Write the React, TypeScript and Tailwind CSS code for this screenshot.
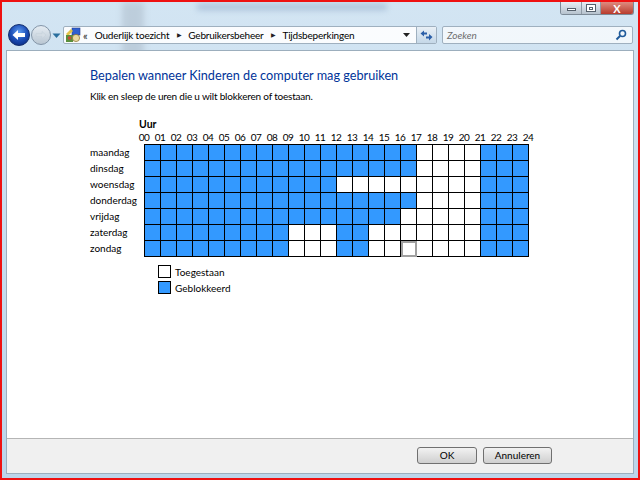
const dagen = ["maandag", "dinsdag", "woensdag", "donderdag", "vrijdag", "zaterdag", "zondag"];

// 1 = geblokkeerd, 0 = toegestaan
const rij = (s: string) => s.split("").map((c) => c === "1");
const uren = [
  rij("111111111111111110000111"),
  rij("111111111111111110000111"),
  rij("111111111111000000000111"),
  rij("111111111111111110000111"),
  rij("111111111111111100000111"),
  rij("111111111000110000000111"),
  rij("111111111000110000000111"),
];
const labels = Array.from({ length: 25 }, (_, i) => String(i).padStart(2, "0"));

function BackButton() {
  return (
    <svg width="22" height="22" viewBox="0 0 22 22" className="shrink-0">
      <defs>
        <radialGradient id="bk" cx="50%" cy="35%" r="70%">
          <stop offset="0%" stopColor="#5f9cf0" />
          <stop offset="55%" stopColor="#1d4fb8" />
          <stop offset="100%" stopColor="#0a2a80" />
        </radialGradient>
      </defs>
      <circle cx="11" cy="11" r="10.5" fill="url(#bk)" stroke="#16306f" />
      <path d="M4.5 11 L10 6 V9 H17 V13 H10 V16 Z" fill="#fff" />
    </svg>
  );
}

function ForwardButton() {
  return (
    <svg width="20" height="20" viewBox="0 0 20 20" className="shrink-0">
      <defs>
        <linearGradient id="fw" x1="0" y1="0" x2="0" y2="1">
          <stop offset="0%" stopColor="#e6edf3" />
          <stop offset="100%" stopColor="#b9c6d2" />
        </linearGradient>
      </defs>
      <circle cx="10" cy="10" r="9.5" fill="url(#fw)" stroke="#8496a8" />
      <path d="M15 10 L11 6.5 V8.7 H5 V11.3 H11 V13.5 Z" fill="#d4dde5" stroke="#c2ced9" strokeWidth="0.5" />
    </svg>
  );
}

function PanelIcon() {
  return (
    <svg width="16" height="16" viewBox="0 0 16 16" className="shrink-0">
      <rect x="7" y="1" width="8" height="7" fill="#2f5fd0" stroke="#27408b" strokeWidth="0.6" />
      <path d="M1 7 L6 2 L8 4 L3 9 Z" fill="#e3c34a" />
      <rect x="1" y="8" width="7" height="7" fill="#5a8f3c" />
      <circle cx="11" cy="11" r="3.6" fill="#e8d9a0" stroke="#8a6b2a" strokeWidth="0.7" />
      <circle cx="4.5" cy="11" r="1.8" fill="#c64a3a" />
    </svg>
  );
}

function App() {
  return (
    <div
      className="w-[640px] h-[480px] relative overflow-hidden border-2 border-[#ee1111] flex flex-col bg-gradient-to-b from-[#d3e5f3] to-[#bcd5ea] text-black"
      style={{ fontFamily: 'Lato, "Noto Sans", sans-serif' }}
    >
      {/* vage achtergrond achter het glas */}
      <div className="absolute left-[120px] top-0 w-[22px] h-[60px] bg-[#a9b8c6] opacity-50 blur-[3px]" />
      <div className="absolute left-[195px] top-[2px] w-[190px] h-[6px] bg-[#8ea8c8] opacity-60 blur-[3px]" />

      {/* titelbalk */}
      <div className="relative h-[13px] flex justify-end items-start pr-[4px] shrink-0">
        <div className="flex h-[13px] w-[74px] rounded-b-[3px] border border-t-0 border-[#7d8a97] overflow-hidden">
          <div className="w-[21px] flex items-end justify-center pb-[3px] bg-gradient-to-b from-[#e8eef4] to-[#b6c2ce] border-r border-[#8e9aa6]">
            <div className="w-[9px] h-[3px] bg-white border border-[#55606c]" />
          </div>
          <div className="w-[19px] flex items-center justify-center bg-gradient-to-b from-[#e8eef4] to-[#b6c2ce] border-r border-[#8e9aa6]">
            <div className="w-[10px] h-[8px] bg-white border border-[#55606c] flex items-center justify-center">
              <div className="w-[4px] h-[3px] border border-[#55606c]" />
            </div>
          </div>
          <div className="flex-1 flex items-center justify-center bg-gradient-to-b from-[#dd8b80] to-[#b83a2c] text-white text-[11px] font-bold leading-none">
            X
          </div>
        </div>
      </div>

      {/* navigatie */}
      <div className="relative h-[35px] shrink-0 flex items-start pl-[6px] pr-[5px] pt-[9px]">
        <BackButton />
        <div className="ml-[1px] mt-[1px]">
          <ForwardButton />
        </div>
        <svg width="9" height="6" viewBox="0 0 9 6" className="mt-[9px] ml-[1px] shrink-0">
          <path d="M0.5 0.5 H8.5 L4.5 5 Z" fill="#2a6f9e" />
        </svg>
        <div className="ml-[2px] mt-[2px] h-[18px] w-[374px] flex items-center bg-white/90 border border-[#9fb0bf] rounded-[2px] pl-[1px] shrink-0">
          <PanelIcon />
          <span className="ml-[2px] text-[11px] leading-none text-[#222]">«</span>
          <span className="ml-[7px] text-[10px] tracking-[-0.2px] leading-none whitespace-nowrap">Ouderlijk toezicht</span>
          <span className="ml-[8px] text-[6px] leading-none text-[#222]">▶</span>
          <span className="ml-[6px] text-[10px] tracking-[-0.2px] leading-none whitespace-nowrap">Gebruikersbeheer</span>
          <span className="ml-[8px] text-[6px] leading-none text-[#222]">▶</span>
          <span className="ml-[6px] text-[10px] tracking-[-0.2px] leading-none whitespace-nowrap">Tijdsbeperkingen</span>
          <svg width="7" height="4" viewBox="0 0 7 4" className="ml-auto mr-[6px]">
            <path d="M0 0 H7 L3.5 4 Z" fill="#222" />
          </svg>
          <div className="w-[20px] h-full border-l border-[#9fb0bf] flex items-center justify-center bg-gradient-to-b from-[#e9f0f6] to-[#c5d8e8] shrink-0">
            <svg width="13" height="11" viewBox="0 0 13 11">
              <path d="M0.5 3.5 L4 0.5 V2.5 H7 V4.5 H4 V6.5 Z" fill="#2b5fa8" />
              <path d="M12.5 7 L9 10.5 L9 8.5 H6 V6.5 H9 V4 Z" fill="#2b5fa8" />
            </svg>
          </div>
        </div>
        <div className="ml-[5px] mt-[2px] h-[18px] flex-1 flex items-center justify-between bg-white/70 border border-[#9fb0bf] rounded-[2px] pl-[4px] pr-[5px]">
          <span className="text-[10px] italic leading-none text-[#6d6d6d]">Zoeken</span>
          <svg width="12" height="12" viewBox="0 0 12 12">
            <circle cx="7.5" cy="4.5" r="3" fill="none" stroke="#1f5a9a" strokeWidth="1.6" />
            <path d="M5 7 L1.5 10.5" stroke="#1f5a9a" strokeWidth="2" />
          </svg>
        </div>
      </div>

      {/* inhoud */}
      <div className="relative flex-1 flex flex-col mx-[4px] mb-[4px] border border-[#9caebd] bg-white min-h-0">
        <div className="flex-1 flex flex-col pl-[83px] pt-[14px] min-h-0">
          <h1 className="text-[12.7px] leading-[20px] text-[#003399] whitespace-nowrap">
            Bepalen wanneer Kinderen de computer mag gebruiken
          </h1>
          <p className="mt-[4px] text-[10px] tracking-[-0.2px] leading-[15px] whitespace-nowrap">
            Klik en sleep de uren die u wilt blokkeren of toestaan.
          </p>

          <div className="mt-[14px] pl-[49px] text-[10.5px] leading-[13px] font-bold">Uur</div>
          <div className="flex pl-[46px] h-[13px]">
            {labels.map((l) => (
              <div
                key={l}
                className="w-[16px] shrink-0 flex justify-center text-[10px] tracking-[-0.5px] leading-[13px]"
              >
                {l}
              </div>
            ))}
          </div>

          <div className="flex">
            <div className="w-[54px] shrink-0 flex flex-col">
              {dagen.map((d) => (
                <div key={d} className="h-[16px] text-[10px] leading-[16px] whitespace-nowrap">
                  {d}
                </div>
              ))}
            </div>
            <div className="grid grid-cols-[repeat(24,16px)] auto-rows-[16px] w-[385px] border-l border-t border-black box-border">
              {uren.map((r, y) =>
                r.map((b, x) => (
                  <div
                    key={`${y}-${x}`}
                    className={`border-r border-b border-black ${b ? "bg-[#3399ff]" : "bg-white"} ${
                      y === 6 && x === 16 ? "outline-2 -outline-offset-2 outline-[#a0a0a0]" : ""
                    }`}
                  />
                ))
              )}
            </div>
          </div>

          <div className="mt-[8px] ml-[68px] flex flex-col gap-[3px]">
            <div className="flex items-center h-[13px]">
              <div className="w-[13px] h-[13px] border border-black bg-white" />
              <span className="ml-[4px] text-[10px] leading-none">Toegestaan</span>
            </div>
            <div className="flex items-center h-[13px]">
              <div className="w-[13px] h-[13px] border border-black bg-[#3399ff]" />
              <span className="ml-[4px] text-[10px] leading-none">Geblokkeerd</span>
            </div>
          </div>
        </div>

        {/* knoppen */}
        <div className="h-[35px] shrink-0 flex items-center justify-end gap-[6px] pr-[81px] pb-[2px] bg-[#f0f0f0] border-t border-[#b5b5b5]">
          <button className="w-[60px] h-[17px] flex items-center justify-center border border-[#707070] rounded-[3px] bg-gradient-to-b from-[#f2f2f2] to-[#cfcfcf] text-[10px] leading-none">
            OK
          </button>
          <button className="w-[69px] h-[17px] flex items-center justify-center border border-[#707070] rounded-[3px] bg-gradient-to-b from-[#f2f2f2] to-[#cfcfcf] text-[10px] leading-none">
            Annuleren
          </button>
        </div>
      </div>
    </div>
  );
}

export default App;
